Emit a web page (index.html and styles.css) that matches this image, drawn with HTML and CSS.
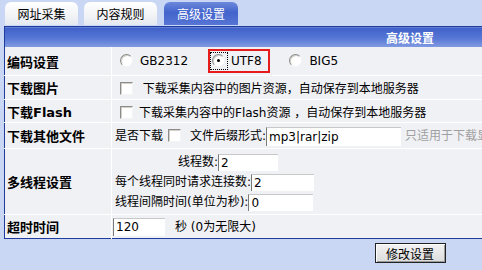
FILE: index.html
```html
<!DOCTYPE html>
<html lang="zh-CN">
<head>
    <meta charset="UTF-8">
    <title>高级设置</title>
    <link rel="stylesheet" href="styles.css">
</head>
<body>

<div class="tabs">
    <div class="tab">网址采集</div>
    <div class="tab">内容规则</div>
    <div class="tab active">高级设置</div>
</div>

<table class="settings">
    <tr class="head">
        <td colspan="2">高级设置</td>
    </tr>
    <tr class="r1">
        <td class="label">编码设置</td>
        <td class="value">
            <span class="radio"></span><span class="opt">GB2312</span>
            <span class="marked"><span class="focus"><span class="radio on"></span></span><span class="opt">UTF8</span></span>
            <span class="radio"></span><span class="opt">BIG5</span>
        </td>
    </tr>
    <tr class="r2">
        <td class="label">下载图片</td>
        <td class="value"><span class="check"></span> 下载采集内容中的图片资源，自动保存到本地服务器</td>
    </tr>
    <tr class="r3">
        <td class="label">下载Flash</td>
        <td class="value"><span class="check"></span>下载采集内容中的Flash资源 ，自动保存到本地服务器</td>
    </tr>
    <tr class="r4">
        <td class="label">下载其他文件</td>
        <td class="value">是否下载<span class="check"></span><span class="suffix">文件后缀形式:<span class="field wide">mp3|rar|zip</span></span><span class="hint">只适用于下载显示</span></td>
    </tr>
    <tr class="r5">
        <td class="label">多线程设置</td>
        <td class="value">
            <div class="line first">线程数:<span class="field w60">2</span></div>
            <div class="line">每个线程同时请求连接数:<span class="field w63">2</span></div>
            <div class="line">线程间隔时间(单位为秒):<span class="field w65">0</span></div>
        </td>
    </tr>
    <tr class="r6">
        <td class="label">超时时间</td>
        <td class="value"><span class="field w52">120</span><span class="unit">秒 (0为无限大)</span></td>
    </tr>
</table>

<div class="actions">
    <button type="button">修改设置</button>
</div>

</body>
</html>
```

FILE: styles.css
```css
body {
    margin: 0;
    padding: 2px 0 0 4px;
    background-color: #c9d6f4;
    font-family: "DejaVu Sans", Verdana, "Noto Sans CJK SC", sans-serif;
    font-size: 12px;
    color: #000;
    overflow: hidden;
}
.tabs {
    display: flex;
    gap: 6px;
    margin-left: 1px;
    height: 24px;
}
.tab {
    width: 73px;
    height: 23px;
    line-height: 23px;
    text-align: center;
    font-family: "Noto Sans CJK SC", sans-serif;
    border-radius: 6px 6px 0 0;
    background: linear-gradient(#ffffff, #f2f3f6 60%, #e4e8f0);
}
.tab.active {
    width: 74px;
    margin-left: 1px;
    color: #fff;
    background: linear-gradient(#6d88dc, #4364cc 45%, #5675d4);
}
.settings {
    width: 812px;
    border-collapse: collapse;
    border: 1px solid #1f3b9b;
    background-color: #f0f1f5;
}
.settings td {
    padding: 0;
    border-bottom: 1px solid #fff;
    vertical-align: middle;
}
.head td {
    height: 20px;
    background: linear-gradient(#3f60c9, #5777d5 55%, #849de2);
    color: #fff;
    font-weight: bold;
    text-align: center;
    font-family: "Noto Sans CJK SC", sans-serif;
    border-bottom: none;
}
.label {
    width: 104px;
    padding-left: 2px !important;
    border-right: 1px solid #fff;
    font-weight: bold;
    font-size: 13px;
    font-family: "DejaVu Sans", "Noto Sans CJK SC", sans-serif;
}
.value {
    padding-left: 8px !important;
    white-space: nowrap;
}
.r1 td { height: 28px; }
.r2 td { height: 23px; }
.r3 td { height: 22px; }
.r4 td { height: 25px; }
.r5 td { height: 65px; }
.r6 td { height: 23px; border-bottom: none; }
.r4 .value, .r5 .value {
    padding-left: 3px !important;
}
.r6 .value {
    padding-left: 1px !important;
}
.radio, .check {
    display: inline-block;
    width: 11px;
    height: 11px;
    vertical-align: -2px;
    background-color: #fff;
    border: 1px solid;
    border-color: #8c8c8c #f4f4f4 #f4f4f4 #8c8c8c;
    box-shadow: inset 1px 1px 0 #d4d0c8;
    position: relative;
}
.radio {
    border-radius: 50%;
}
.radio.on::after {
    content: "";
    position: absolute;
    left: 4px;
    top: 4px;
    width: 3px;
    height: 3px;
    background-color: #000;
    border-radius: 50%;
}
.check {
    margin-right: 6px;
}
.r4 .check {
    margin: 0 0 0 5px;
}
.opt {
    margin-left: 7px;
    margin-right: 17px;
}
.marked {
    display: inline-block;
    border: 2px solid #e61c1c;
    padding: 1px 6px 1px 0;
    margin-left: -1px;
    margin-right: 16px;
}
.marked .opt {
    margin: 0 0 0 3px;
}
.focus {
    display: inline-block;
    padding: 2px 3px 2px 2px;
    outline: 1px dotted #000;
    outline-offset: -1px;
}
.suffix {
    margin-left: 9px;
}
.field {
    display: inline-block;
    height: 17px;
    line-height: 17px;
    padding-left: 2px;
    vertical-align: middle;
    background-color: #fff;
    border-top: 1px solid #c8c8c8;
    border-left: 1px solid #7a7a7a;
    box-sizing: border-box;
}
.wide { width: 135px; height: 19px; line-height: 18px; }
.w60 { width: 60px; }
.w63 { width: 63px; }
.w65 { width: 65px; }
.w52 { width: 52px; height: 18px; }
.hint {
    margin-left: 4px;
    color: #a0a0a0;
}
.line {
    height: 20px;
    line-height: 20px;
}
.line.first {
    padding-left: 63px;
}
.unit {
    margin-left: 10px;
}
.actions {
    width: 812px;
    text-align: center;
    padding-top: 4px;
}
button {
    width: 71px;
    height: 20px;
    padding: 0;
    font-family: "Noto Sans CJK SC", sans-serif;
    font-size: 12px;
    background: linear-gradient(#f2f2f2, #dcdcdc);
    border: 1px solid #222;
    box-shadow: inset 1px 1px 0 #fff, inset -1px -1px 0 #9a9a9a;
}
```
